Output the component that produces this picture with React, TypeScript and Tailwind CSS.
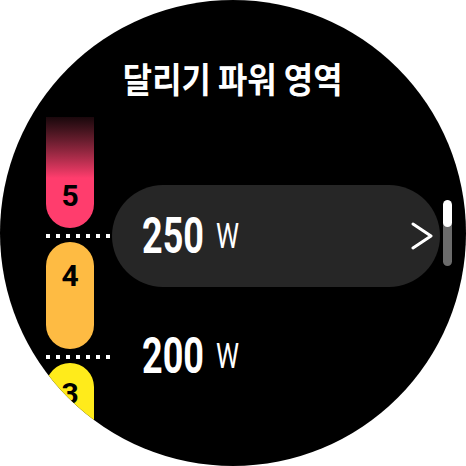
export default function App() {
  const dots = [0, 1, 2, 3, 4, 5, 6];

  const Dots = () => (
    <div className="flex h-[4px] w-[64px] gap-[6px]">
      {dots.map((d) => (
        <span key={d} className="h-[4px] w-[4px] bg-white" />
      ))}
    </div>
  );

  const Value = ({ n }: { n: string }) => (
    <div className="flex items-center text-white [font-family:Roboto,sans-serif]">
      <span className="flex w-[74px]">
        <span className="inline-block origin-left scale-x-[0.72] text-[50px] font-bold leading-none">{n}</span>
      </span>
      <span className="flex w-[26px]">
        <span className="inline-block origin-left scale-x-[0.74] text-[35px] font-normal leading-none">W</span>
      </span>
    </div>
  );

  return (
    <div className="h-[466px] w-[466px] bg-white">
      <div className="flex h-[466px] w-[466px] flex-col overflow-hidden rounded-full bg-black">
        {/* title */}
        <div className="flex justify-center pt-[60px]">
          <span className="inline-block scale-x-[0.91] text-[35px] font-bold leading-none text-white [font-family:'Noto_Sans_CJK_KR',sans-serif]">
            달리기 파워 영역
          </span>
        </div>

        <div className="mt-[22px] flex pl-[46px]">
          {/* zone column */}
          <div className="flex w-[64px] flex-col gap-[4px] [font-family:Roboto,sans-serif]">
            <div className="flex h-[111px] w-[48px] flex-col items-center justify-end rounded-b-[24px] bg-linear-to-b from-[#1a080c] to-[#ff3d6d] to-55% pb-[20px]">
              <span className="text-[30px] font-bold leading-[24px] text-black">5</span>
            </div>
            <div className="mt-[2px]">
              <Dots />
            </div>
            <div className="flex h-[107px] w-[48px] flex-col items-center rounded-[24px] bg-[#febb43] pt-[22px]">
              <span className="text-[30px] font-bold leading-[24px] text-black">4</span>
            </div>
            <div className="mt-[2px]">
              <Dots />
            </div>
            <div className="flex h-[107px] w-[48px] flex-col items-center rounded-t-[24px] bg-[#ffeb1b] pt-[19px]">
              <span className="text-[30px] font-bold leading-[24px] text-black">3</span>
            </div>
          </div>

          {/* values */}
          <div className="ml-[2px] flex flex-col pt-[68px]">
            <div className="flex items-center gap-[3px]">
              <div className="flex h-[102px] w-[328px] items-center rounded-full bg-[#262626] pl-[30px] pr-[7px]">
                <Value n="250" />
                <svg className="ml-auto" width="22" height="28" viewBox="0 0 22 28">
                  <polyline
                    points="2,2 20,14 2,26"
                    fill="none"
                    stroke="white"
                    strokeWidth="3"
                    strokeLinecap="round"
                    strokeLinejoin="round"
                  />
                </svg>
              </div>
              <div className="-mt-[6px] flex h-[66px] w-[9px] flex-col overflow-hidden rounded-full bg-[#6b6b6b]">
                <div className="h-[27px] rounded-full bg-white" />
              </div>
            </div>
            <div className="mt-[18px] flex h-[102px] items-center pl-[30px]">
              <Value n="200" />
            </div>
          </div>
        </div>
      </div>
    </div>
  );
}
